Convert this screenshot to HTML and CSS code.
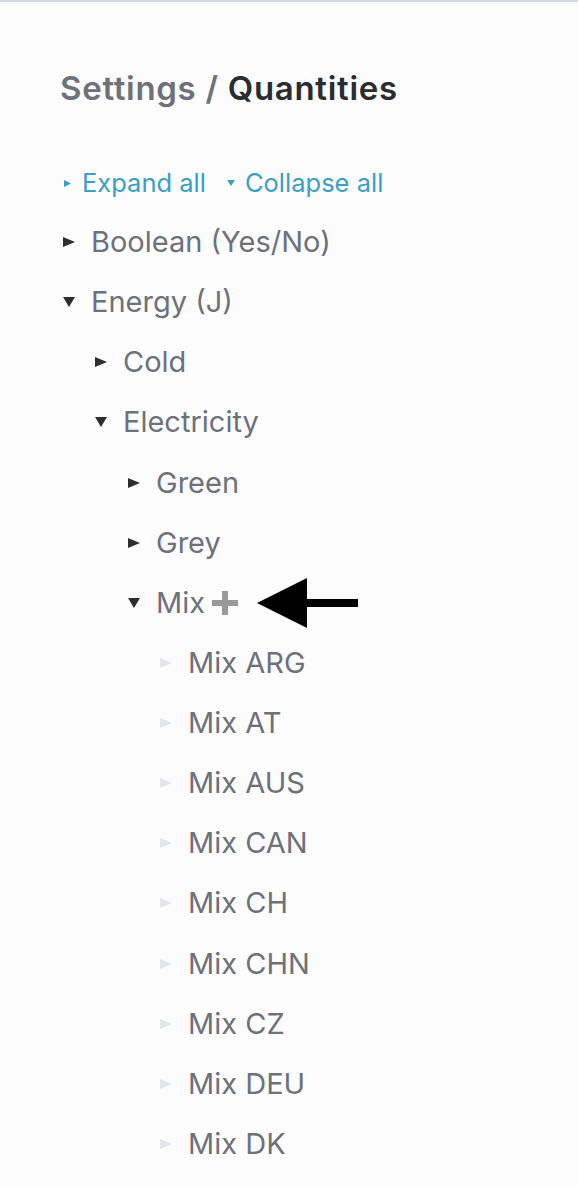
FILE: index.html
```html
<!DOCTYPE html>
<html>
<head>
<meta charset="utf-8">
<link rel="stylesheet" href="styles.css">
</head>
<body>
<div class="page">
  <h1 class="title"><span class="crumb">Settings / </span><span class="current">Quantities</span></h1>
  <div class="links">
    <a class="link"><svg class="tri-s" width="8" height="7" viewBox="0 0 8 7"><path d="M0 0L7 3.5L0 7Z"/></svg>Expand all</a>
    <a class="link"><svg class="tri-s" width="8" height="7" viewBox="0 0 8 7"><path d="M0 0H8L4 6Z"/></svg>Collapse all</a>
  </div>
  <ul class="tree">
    <li class="row l0"><svg class="tri" viewBox="0 0 12 10"><path d="M0 0L12 5L0 10Z"/></svg><span>Boolean (Yes/No)</span></li>
    <li class="row l0"><svg class="tri" viewBox="0 0 12 10"><path d="M0 0H12L6 10Z"/></svg><span>Energy (J)</span></li>
    <li class="row l1"><svg class="tri" viewBox="0 0 12 10"><path d="M0 0L12 5L0 10Z"/></svg><span>Cold</span></li>
    <li class="row l1"><svg class="tri" viewBox="0 0 12 10"><path d="M0 0H12L6 10Z"/></svg><span>Electricity</span></li>
    <li class="row l2"><svg class="tri" viewBox="0 0 12 10"><path d="M0 0L12 5L0 10Z"/></svg><span>Green</span></li>
    <li class="row l2"><svg class="tri" viewBox="0 0 12 10"><path d="M0 0L12 5L0 10Z"/></svg><span>Grey</span></li>
    <li class="row l2"><svg class="tri" viewBox="0 0 12 10"><path d="M0 0H12L6 10Z"/></svg><span>Mix</span>
      <svg class="plus" width="26" height="24" viewBox="0 0 26 24"><path d="M10 0H16V9H26V15H16V24H10V15H0V9H10Z"/></svg>
      <svg class="arrow" width="101" height="50" viewBox="0 0 101 50"><path d="M0 25L50 0V21H101V29H50V50Z"/></svg>
    </li>
    <li class="row l3 leaf"><svg class="tri" viewBox="0 0 12 10"><path d="M0 0L12 5L0 10Z"/></svg><span>Mix ARG</span></li>
    <li class="row l3 leaf"><svg class="tri" viewBox="0 0 12 10"><path d="M0 0L12 5L0 10Z"/></svg><span>Mix AT</span></li>
    <li class="row l3 leaf"><svg class="tri" viewBox="0 0 12 10"><path d="M0 0L12 5L0 10Z"/></svg><span>Mix AUS</span></li>
    <li class="row l3 leaf"><svg class="tri" viewBox="0 0 12 10"><path d="M0 0L12 5L0 10Z"/></svg><span>Mix CAN</span></li>
    <li class="row l3 leaf"><svg class="tri" viewBox="0 0 12 10"><path d="M0 0L12 5L0 10Z"/></svg><span>Mix CH</span></li>
    <li class="row l3 leaf"><svg class="tri" viewBox="0 0 12 10"><path d="M0 0L12 5L0 10Z"/></svg><span>Mix CHN</span></li>
    <li class="row l3 leaf"><svg class="tri" viewBox="0 0 12 10"><path d="M0 0L12 5L0 10Z"/></svg><span>Mix CZ</span></li>
    <li class="row l3 leaf"><svg class="tri" viewBox="0 0 12 10"><path d="M0 0L12 5L0 10Z"/></svg><span>Mix DEU</span></li>
    <li class="row l3 leaf"><svg class="tri" viewBox="0 0 12 10"><path d="M0 0L12 5L0 10Z"/></svg><span>Mix DK</span></li>
  </ul>
</div>
</body>
</html>
```

FILE: styles.css
```css
html, body {
  margin: 0;
  padding: 0;
  background: #fcfcfc;
}
body {
  border-top: 2px solid #d5dadf;
  font-family: Inter, "Liberation Sans", sans-serif;
  min-height: 1184px;
}
.page {
  padding: 66px 0 0 60px;
}
.title {
  margin: 0;
  font-size: 33px;
  line-height: 40px;
  font-weight: 600;
  letter-spacing: 0.7px;
}
.crumb { color: #6c717a; }
.current { color: #2a2c2f; }
.links {
  margin-top: 60px;
  height: 30px;
  display: flex;
  align-items: center;
  gap: 21px;
  padding-left: 4px;
}
.link {
  display: flex;
  align-items: center;
  color: #3b9fc1;
  font-size: 25.5px;
  line-height: 30px;
}
.tri-s {
  fill: #3b9fc1;
  margin-right: 10px;
}
.tree {
  list-style: none;
  margin: 14px 0 0 0;
  padding: 0 0 0 3px;
}
.row {
  height: 60.13px;
  display: flex;
  align-items: center;
  color: #6c717a;
  font-size: 29px;
  line-height: 34px;
}
.tri {
  width: 12px;
  height: 10px;
  fill: #2d2d2e;
  margin-right: 16px;
  flex: none;
}
.leaf .tri { fill: #e2e5e9; }
.l1 { padding-left: 32px; }
.l2 { padding-left: 65px; }
.l3 { padding-left: 97px; }
.plus {
  fill: #9a9a9a;
  margin-left: 7px;
  flex: none;
}
.arrow {
  fill: #000;
  margin-left: 19px;
  flex: none;
}
```
